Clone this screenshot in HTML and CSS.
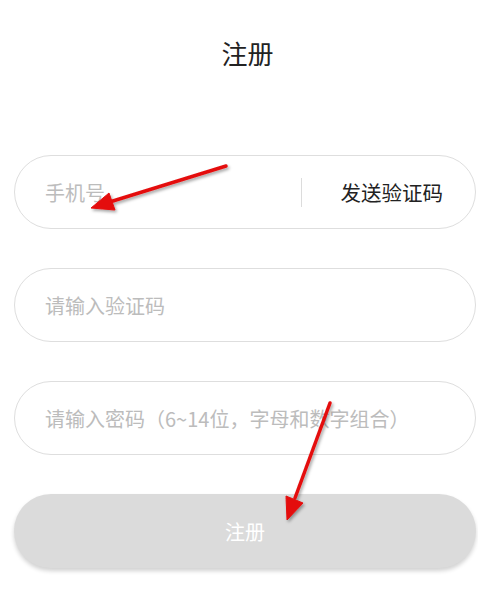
FILE: index.html
```html
<!DOCTYPE html>
<html>
  <head>
    <meta charset="utf-8" />
    <title>注册</title>
    <link rel="stylesheet" href="styles.css">
  </head>
  <body>
    <div id="page">
      <h1 class="title">注册</h1>
      <form class="form">
        <div class="field">
          <input type="text" placeholder="手机号"/>
          <span class="divider"></span>
          <span class="send">发送验证码</span>
        </div>
        <div class="field">
          <input type="text" placeholder="请输入验证码"/>
        </div>
        <div class="field">
          <input type="password" placeholder="请输入密码（6~14位，字母和数字组合）"/>
        </div>
        <button type="button" class="submit">注册</button>
      </form>
      <svg class="marks" width="478" height="597" viewBox="0 0 478 597">
        <defs>
          <filter id="shade" x="-20%" y="-20%" width="140%" height="140%">
            <feDropShadow dx="1.5" dy="2" stdDeviation="1.5" flood-color="#000" flood-opacity="0.35"/>
          </filter>
        </defs>
        <g filter="url(#shade)" fill="#e41111" stroke="#e41111">
          <line x1="226" y1="166" x2="108" y2="202.5" stroke-width="3.5" stroke-linecap="round"/>
          <polygon points="91,208 115,210 109,193" stroke-width="1" stroke-linejoin="round"/>
          <line x1="330" y1="403" x2="295" y2="498" stroke-width="3.5" stroke-linecap="round"/>
          <polygon points="287,520 303,503 286,496" stroke-width="1" stroke-linejoin="round"/>
        </g>
      </svg>
    </div>
  </body>
</html>
```

FILE: styles.css
```css
*{
  box-sizing: border-box;
  font-family: "Noto Sans CJK SC", "Noto Sans", sans-serif;
}
body{
  margin: 0;
  background-color: #fff;
}
#page{
  position: relative;
  width: 478px;
  height: 597px;
  overflow: hidden;
}
.title{
  margin: 0;
  padding: 35px 0 0 17px;
  line-height: 36px;
  font-size: 26px;
  font-weight: normal;
  color: #222;
  text-align: center;
}
.form{
  display: grid;
  grid-template-columns: 1fr;
  row-gap: 39px;
  margin: 84px 2px 0 14px;
}
.field{
  display: flex;
  align-items: center;
  height: 74px;
  border: 1px solid #dedede;
  border-radius: 37px;
  padding: 0 32px 0 30px;
}
.field input{
  flex: 1;
  min-width: 0;
  border: none;
  outline: none;
  background: none;
  padding: 0;
  font-size: 20px;
  color: #333;
}
.field input::placeholder{
  color: #bcbcbc;
}
.divider{
  width: 1px;
  height: 29px;
  background-color: #dcdcdc;
  margin-right: 39px;
}
.send{
  font-size: 20.5px;
  color: #222;
}
.submit{
  height: 74px;
  border: none;
  border-radius: 37px;
  background-color: #dbdbdb;
  box-shadow: 0 3px 4px rgba(0, 0, 0, 0.18);
  color: #fff;
  font-size: 20px;
  padding-left: 6px;
  cursor: pointer;
}
.marks{
  position: absolute;
  left: 0;
  top: 0;
  pointer-events: none;
}
```
